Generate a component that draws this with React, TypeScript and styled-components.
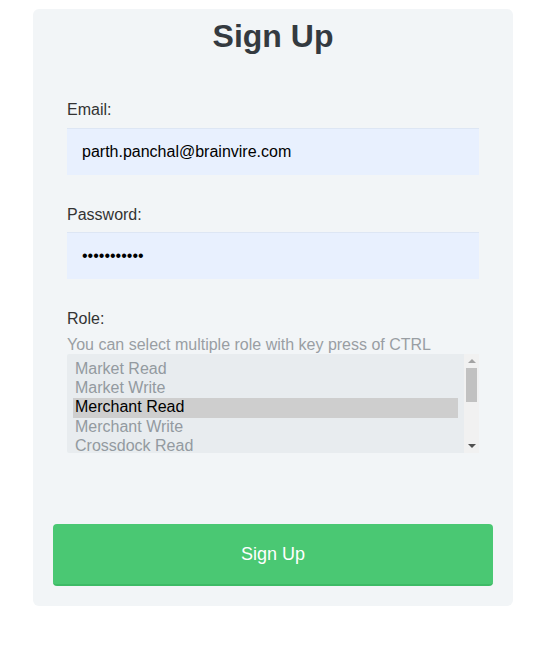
import React from "react";
import styled, { createGlobalStyle } from "styled-components";

const Global = createGlobalStyle`
  html, body { margin: 0; padding: 0; background: #ffffff; }
  body { font-family: "Liberation Sans", Arial, sans-serif; }
  * { box-sizing: border-box; }
`;

const Page = styled.div`
  padding: 9px 24px 0 33px;
`;

const Card = styled.form`
  width: 480px;
  background: #f2f5f7;
  border-radius: 6px;
  padding: 9px 20px 20px;
  display: flex;
  flex-direction: column;
`;

const Title = styled.h1`
  margin: 0;
  font-size: 32px;
  line-height: 37px;
  font-weight: 700;
  color: #343a40;
  text-align: center;
`;

const Fields = styled.div`
  padding: 46px 14px 0;
  display: flex;
  flex-direction: column;
  gap: 31px;
`;

const Field = styled.div`
  display: flex;
  flex-direction: column;
`;

const Label = styled.label<{ $gap?: number }>`
  font-size: 16px;
  line-height: 18px;
  color: #333333;
  margin-bottom: ${(p) => p.$gap ?? 9}px;
`;

const Hint = styled.div`
  font-size: 16px;
  line-height: 18px;
  color: #999ea3;
`;

const Input = styled.input`
  height: 47px;
  width: 100%;
  border: none;
  border-top: 1px solid #dde6f4;
  background: #e8f0fe;
  padding: 0 15px;
  font-family: "Liberation Sans", Arial, sans-serif;
  font-size: 16px;
  color: #000;
  outline: none;
`;

const SelectWrap = styled.div`
  position: relative;
  height: 99px;
`;

const RoleSelect = styled.select`
  display: block;
  width: 100%;
  height: 99px;
  border: none;
  background: #e8ecef;
  padding: 6px 21px 0 6px;
  font-family: "Liberation Sans", Arial, sans-serif;
  font-size: 16px;
  color: #939aa0;
  outline: none;
  overflow-y: hidden;

  option {
    padding: 0 2px;
    line-height: 19px;
  }
  option:checked {
    background: #cecece linear-gradient(#cecece, #cecece);
    color: #000;
  }
`;

const ScrollTrack = styled.div`
  position: absolute;
  top: 0;
  right: 0;
  width: 15px;
  height: 99px;
  background: #f1f1f1;
  display: flex;
  flex-direction: column;
  align-items: center;
  pointer-events: none;
`;

const Arrow = styled.div<{ $dir: "up" | "down" }>`
  width: 0;
  height: 0;
  margin: ${(p) => (p.$dir === "up" ? "5px 0 0" : "auto 0 5px")};
  border-left: 4px solid transparent;
  border-right: 4px solid transparent;
  ${(p) =>
    p.$dir === "up"
      ? "border-bottom: 4px solid #a3a3a3;"
      : "border-top: 4px solid #505050;"}
`;

const Thumb = styled.div`
  width: 11px;
  height: 34px;
  margin-top: 5px;
  background: #c1c1c1;
`;

const Button = styled.button`
  margin-top: 71px;
  height: 62px;
  width: 100%;
  border: none;
  border-bottom: 2px solid #3ebb66;
  border-radius: 4px;
  background: #4ac873;
  color: #ffffff;
  font-family: "Liberation Sans", Arial, sans-serif;
  font-size: 18px;
  cursor: pointer;
`;

const roles = [
  "Market Read",
  "Market Write",
  "Merchant Read",
  "Merchant Write",
  "Crossdock Read",
  "Crossdock Write",
  "Admin",
  "Super Admin",
];

export default function App() {
  return (
    <Page>
      <Global />
      <Card onSubmit={(e) => e.preventDefault()}>
        <Title>Sign Up</Title>
        <Fields>
          <Field>
            <Label htmlFor="email">Email:</Label>
            <Input id="email" type="email" defaultValue="parth.panchal@brainvire.com" />
          </Field>
          <Field>
            <Label htmlFor="password" $gap={8}>Password:</Label>
            <Input id="password" type="password" defaultValue="password123" />
          </Field>
          <Field>
            <Label htmlFor="role" $gap={8}>Role:</Label>
            <Hint>You can select multiple role with key press of CTRL</Hint>
            <SelectWrap>
              <RoleSelect id="role" multiple defaultValue={["Merchant Read"]}>
                {roles.map((r) => (
                  <option key={r} value={r}>{r}</option>
                ))}
              </RoleSelect>
              <ScrollTrack aria-hidden="true">
                <Arrow $dir="up" />
                <Thumb />
                <Arrow $dir="down" />
              </ScrollTrack>
            </SelectWrap>
          </Field>
        </Fields>
        <Button type="submit">Sign Up</Button>
      </Card>
    </Page>
  );
}
